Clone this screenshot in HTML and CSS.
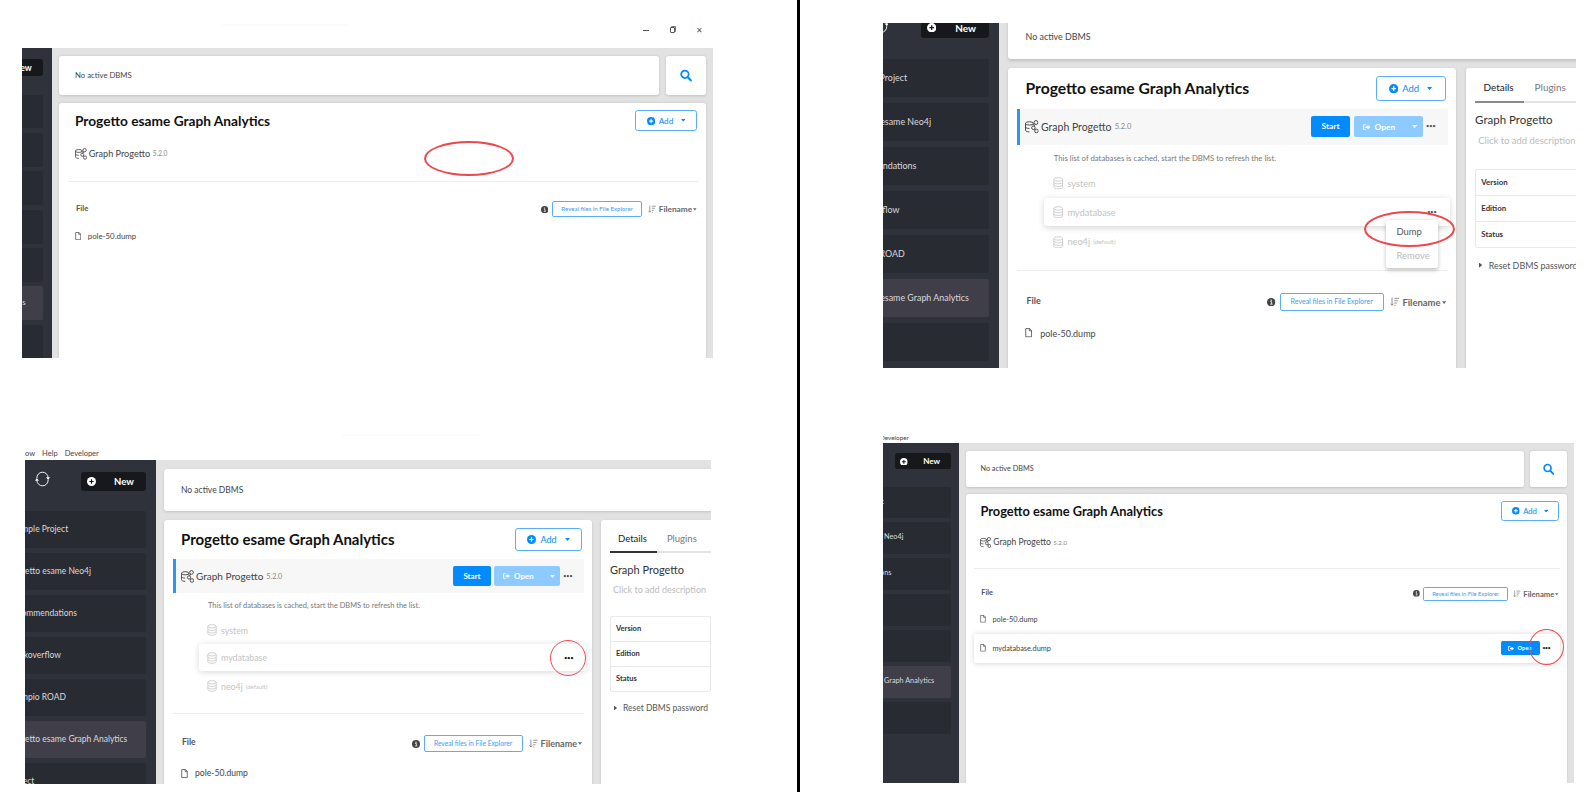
FILE: index.html
```html
<!DOCTYPE html>
<html lang="en">
<head>
<meta charset="utf-8">
<title>Neo4j Desktop steps</title>
<link rel="stylesheet" href="styles.css">
</head>
<body>

<svg class="defs" width="0" height="0">
  <symbol id="i-plus" viewBox="0 0 16 16"><circle cx="8" cy="8" r="8" fill="currentColor"/><path d="M8 4v8M4 8h8" stroke="var(--plus, #fff)" stroke-width="2.2"/></symbol>
  <symbol id="i-caret" viewBox="0 0 8 5"><path d="M0 0h8L4 5z" fill="currentColor"/></symbol>
  <symbol id="i-search" viewBox="0 0 16 16"><circle cx="6.6" cy="6.6" r="5" fill="none" stroke="currentColor" stroke-width="2.4"/><path d="M10.4 10.4l4.4 4.6" stroke="currentColor" stroke-width="2.8" stroke-linecap="round"/></symbol>
  <symbol id="i-graph" viewBox="0 0 14 14" fill="none" stroke="currentColor" stroke-width="1"><ellipse cx="4.5" cy="3.5" rx="4" ry="1.7"/><path d="M.5 3.5v7c0 1 1.8 1.7 4 1.7M.5 7c0 1 1.8 1.7 4 1.7M8.5 3.5v2"/><circle cx="11.3" cy="2.6" r="2"/><circle cx="8.6" cy="8" r="1.8"/><circle cx="11.8" cy="11.3" r="1.9"/><path d="M10.5 4.4L9.2 6.4M9.8 9.4l.8.7"/></symbol>
  <symbol id="i-db" viewBox="0 0 12 14" fill="none" stroke="currentColor" stroke-width="1"><ellipse cx="6" cy="2.6" rx="5" ry="2"/><path d="M1 2.6v8.8c0 1.1 2.2 2 5 2s5-.9 5-2V2.6M1 5.6c0 1.1 2.2 2 5 2s5-.9 5-2M1 8.6c0 1.1 2.2 2 5 2s5-.9 5-2"/></symbol>
  <symbol id="i-file" viewBox="0 0 10 13" fill="none" stroke="currentColor" stroke-width="1.1"><path d="M1 .8h5.4L9 3.4v8.8H1zM6 .8v3h3"/></symbol>
  <symbol id="i-info" viewBox="0 0 16 16"><circle cx="8" cy="8" r="8" fill="currentColor"/><path d="M6.2 7h2.6v4.4M6.2 11.8h4.4" stroke="#fff" stroke-width="1.6" fill="none"/><circle cx="8" cy="4.4" r="1.3" fill="#fff"/></symbol>
  <symbol id="i-sort" viewBox="0 0 14 14" fill="none" stroke="currentColor" stroke-width="1.2"><path d="M3 1v11M.8 10l2.2 2.4L5.2 10M6.5 2h7M6.5 5.5h5.4M6.5 9h3.6M6.5 12.5h1.8"/></symbol>
  <symbol id="i-sync" viewBox="0 0 16 16" fill="none" stroke="currentColor" stroke-width="1"><path d="M2 7A6 6 0 0 1 14 6.5M14 9A6 6 0 0 1 2 9.5"/><path d="M11.8 6.2H16L14 9zM0 9.8h4.2L2 7z" fill="currentColor" stroke="none"/></symbol>
  <symbol id="i-open" viewBox="0 0 12 10"><path d="M4.6 1H1v8h3.6" fill="none" stroke="currentColor" stroke-width="1.5"/><path d="M4 3.6h3.4V1L12 5 7.4 9V6.4H4z" fill="currentColor"/></symbol>
</svg>

<div class="smudge smudge-a"></div>
<div class="smudge smudge-c"></div>
<div class="divider-line"></div>

<!-- window buttons of the first shot -->
<div class="win-controls">
  <span class="win-min"></span>
  <span class="win-max"></span>
  <span class="win-close">&#10005;</span>
</div>

<!-- step 1: project without selected dbms -->
<div class="shot shot-a">
  <div class="app">
    <div class="sidebar">
      <div class="sidebar-inner">
        <div class="side-head"><svg class="sync"><use href="#i-sync"/></svg><div class="new-btn"><svg class="new-plus"><use href="#i-plus"/></svg><span>New</span></div></div>
        <div class="side-item"></div>
        <div class="side-item"></div>
        <div class="side-item"></div>
        <div class="side-item"></div>
        <div class="side-item"></div>
        <div class="side-item active">Progetto esame Graph Analytics</div>
        <div class="side-item"></div>
      </div>
    </div>
    <div class="content">
      <div class="top-row">
        <div class="card status">No active DBMS</div>
        <div class="card search"><svg class="search-icon"><use href="#i-search"/></svg></div>
      </div>
      <div class="card main">
        <div class="main-head">
          <h1>Progetto esame Graph Analytics</h1>
          <div class="add-btn"><svg class="add-plus"><use href="#i-plus"/></svg><span>Add</span><svg class="caret"><use href="#i-caret"/></svg></div>
        </div>
        <div class="dbms-row">
          <svg class="graph-icon"><use href="#i-graph"/></svg><span class="dbms-name">Graph Progetto</span><span class="dbms-ver">5.2.0</span>
        </div>
        <div class="rule"></div>
        <div class="files-head">
          <span class="files-title">File</span>
          <svg class="info-icon"><use href="#i-info"/></svg>
          <div class="reveal-btn">Reveal files in File Explorer</div>
          <svg class="sort-icon"><use href="#i-sort"/></svg>
          <span class="sort-label">Filename</span><svg class="sort-caret"><use href="#i-caret"/></svg>
        </div>
        <div class="file-row"><svg class="file-icon"><use href="#i-file"/></svg><span>pole-50.dump</span></div>
      </div>
    </div>
  </div>
</div>

<!-- step 3: dump menu -->
<div class="shot shot-b">
  <div class="app">
    <div class="sidebar">
      <div class="sidebar-inner">
        <div class="side-head"><svg class="sync"><use href="#i-sync"/></svg><div class="new-btn"><svg class="new-plus"><use href="#i-plus"/></svg><span>New</span></div></div>
        <div class="side-item">Example Project</div>
        <div class="side-item">Progetto esame Neo4j</div>
        <div class="side-item">Recommendations</div>
        <div class="side-item">Stackoverflow</div>
        <div class="side-item">Esempio ROAD</div>
        <div class="side-item active">Progetto esame Graph Analytics</div>
        <div class="side-item"></div>
      </div>
    </div>
    <div class="content wide">
      <div class="top-row">
        <div class="card status">No active DBMS</div>
      </div>
      <div class="panes">
        <div class="card main fixed">
          <div class="main-head">
            <h1>Progetto esame Graph Analytics</h1>
            <div class="add-btn"><svg class="add-plus"><use href="#i-plus"/></svg><span>Add</span><svg class="caret"><use href="#i-caret"/></svg></div>
          </div>
          <div class="dbms-row selected">
            <svg class="graph-icon"><use href="#i-graph"/></svg><span class="dbms-name">Graph Progetto</span><span class="dbms-ver">5.2.0</span>
            <div class="btn-start">Start</div>
            <div class="btn-open"><svg class="open-icon"><use href="#i-open"/></svg><span>Open</span><svg class="open-caret"><use href="#i-caret"/></svg></div>
            <span class="dots">&bull;&bull;&bull;</span>
          </div>
          <div class="db-list">
            <div class="db-hint">This list of databases is cached, start the DBMS to refresh the list.</div>
            <div class="db-row"><svg class="db-icon"><use href="#i-db"/></svg><span>system</span></div>
            <div class="db-row raised"><svg class="db-icon"><use href="#i-db"/></svg><span>mydatabase</span><span class="dots">&bull;&bull;&bull;</span>
              <div class="db-menu">
                <div class="menu-item">Dump</div>
                <div class="menu-item off">Remove</div>
              </div>
            </div>
            <div class="db-row"><svg class="db-icon"><use href="#i-db"/></svg><span>neo4j</span><span class="db-default">(default)</span></div>
          </div>
          <div class="rule"></div>
          <div class="files-head">
            <span class="files-title">File</span>
            <svg class="info-icon"><use href="#i-info"/></svg>
            <div class="reveal-btn">Reveal files in File Explorer</div>
            <svg class="sort-icon"><use href="#i-sort"/></svg>
            <span class="sort-label">Filename</span><svg class="sort-caret"><use href="#i-caret"/></svg>
          </div>
          <div class="file-row"><svg class="file-icon"><use href="#i-file"/></svg><span>pole-50.dump</span></div>
        </div>
        <div class="card details">
          <div class="tabs soft"><span class="tab on">Details</span><span class="tab">Plugins</span></div>
          <div class="det-title">Graph Progetto</div>
          <div class="det-desc">Click to add description</div>
          <div class="det-table"><div>Version</div><div>Edition</div><div>Status</div></div>
          <div class="det-reset"><svg class="reset-caret"><use href="#i-caret"/></svg>Reset DBMS password</div>
        </div>
      </div>
    </div>
  </div>
</div>

<!-- step 2: hover on the database row -->
<div class="menu-bar menu-c"><span>ow</span><span>Help</span><span>Developer</span></div>
<div class="shot shot-c">
  <div class="app">
    <div class="sidebar">
      <div class="sidebar-inner">
        <div class="side-head"><svg class="sync"><use href="#i-sync"/></svg><div class="new-btn"><svg class="new-plus"><use href="#i-plus"/></svg><span>New</span></div></div>
        <div class="side-item">Example Project</div>
        <div class="side-item">Progetto esame Neo4j</div>
        <div class="side-item">Recommendations</div>
        <div class="side-item">Stackoverflow</div>
        <div class="side-item">Esempio ROAD</div>
        <div class="side-item active">Progetto esame Graph Analytics</div>
        <div class="side-item">Project</div>
      </div>
    </div>
    <div class="content wide">
      <div class="top-row">
        <div class="card status">No active DBMS</div>
      </div>
      <div class="panes">
        <div class="card main fixed">
          <div class="main-head">
            <h1>Progetto esame Graph Analytics</h1>
            <div class="add-btn"><svg class="add-plus"><use href="#i-plus"/></svg><span>Add</span><svg class="caret"><use href="#i-caret"/></svg></div>
          </div>
          <div class="dbms-row selected">
            <svg class="graph-icon"><use href="#i-graph"/></svg><span class="dbms-name">Graph Progetto</span><span class="dbms-ver">5.2.0</span>
            <div class="btn-start">Start</div>
            <div class="btn-open"><svg class="open-icon"><use href="#i-open"/></svg><span>Open</span><svg class="open-caret"><use href="#i-caret"/></svg></div>
            <span class="dots">&bull;&bull;&bull;</span>
          </div>
          <div class="db-list">
            <div class="db-hint">This list of databases is cached, start the DBMS to refresh the list.</div>
            <div class="db-row"><svg class="db-icon"><use href="#i-db"/></svg><span>system</span></div>
            <div class="db-row raised"><svg class="db-icon"><use href="#i-db"/></svg><span>mydatabase</span><span class="dots dark">&bull;&bull;&bull;</span></div>
            <div class="db-row"><svg class="db-icon"><use href="#i-db"/></svg><span>neo4j</span><span class="db-default">(default)</span></div>
          </div>
          <div class="rule"></div>
          <div class="files-head">
            <span class="files-title">File</span>
            <svg class="info-icon"><use href="#i-info"/></svg>
            <div class="reveal-btn">Reveal files in File Explorer</div>
            <svg class="sort-icon"><use href="#i-sort"/></svg>
            <span class="sort-label">Filename</span><svg class="sort-caret"><use href="#i-caret"/></svg>
          </div>
          <div class="file-row"><svg class="file-icon"><use href="#i-file"/></svg><span>pole-50.dump</span></div>
        </div>
        <div class="card details">
          <div class="tabs"><span class="tab on">Details</span><span class="tab">Plugins</span></div>
          <div class="det-title">Graph Progetto</div>
          <div class="det-desc">Click to add description</div>
          <div class="det-table"><div>Version</div><div>Edition</div><div>Status</div></div>
          <div class="det-reset"><svg class="reset-caret"><use href="#i-caret"/></svg>Reset DBMS password</div>
        </div>
      </div>
    </div>
  </div>
</div>

<!-- step 4: dump listed in files -->
<div class="menu-bar menu-d"><span>Developer</span></div>
<div class="shot shot-d">
  <div class="app">
    <div class="sidebar">
      <div class="sidebar-inner">
        <div class="side-head"><svg class="sync"><use href="#i-sync"/></svg><div class="new-btn"><svg class="new-plus"><use href="#i-plus"/></svg><span>New</span></div></div>
        <div class="side-item">Example Project</div>
        <div class="side-item">Progetto esame Neo4j</div>
        <div class="side-item">Recommendations</div>
        <div class="side-item">Stackoverflow</div>
        <div class="side-item">Esempio ROAD</div>
        <div class="side-item active">Progetto esame Graph Analytics</div>
        <div class="side-item"></div>
      </div>
    </div>
    <div class="content">
      <div class="top-row">
        <div class="card status">No active DBMS</div>
        <div class="card search"><svg class="search-icon"><use href="#i-search"/></svg></div>
      </div>
      <div class="card main">
        <div class="main-head">
          <h1>Progetto esame Graph Analytics</h1>
          <div class="add-btn"><svg class="add-plus"><use href="#i-plus"/></svg><span>Add</span><svg class="caret"><use href="#i-caret"/></svg></div>
        </div>
        <div class="dbms-row">
          <svg class="graph-icon"><use href="#i-graph"/></svg><span class="dbms-name">Graph Progetto</span><span class="dbms-ver">5.2.0</span>
        </div>
        <div class="rule"></div>
        <div class="files-head">
          <span class="files-title">File</span>
          <svg class="info-icon"><use href="#i-info"/></svg>
          <div class="reveal-btn">Reveal files in File Explorer</div>
          <svg class="sort-icon"><use href="#i-sort"/></svg>
          <span class="sort-label">Filename</span><svg class="sort-caret"><use href="#i-caret"/></svg>
        </div>
        <div class="file-row"><svg class="file-icon"><use href="#i-file"/></svg><span>pole-50.dump</span></div>
        <div class="file-row raised"><svg class="file-icon"><use href="#i-file"/></svg><span>mydatabase.dump</span>
          <div class="btn-file-open"><svg class="open-icon"><use href="#i-open"/></svg><span>Open</span></div>
          <span class="dots dark">&bull;&bull;&bull;</span>
        </div>
      </div>
    </div>
  </div>
</div>

<div class="mark mark-a"></div>
<div class="mark mark-b"></div>
<div class="mark thin mark-c"></div>
<div class="mark thin mark-d"></div>

</body>
</html>
```

FILE: styles.css
```css
html, body {
  margin: 0;
  padding: 0;
  background: #fff;
  font-family: "Lato", "Liberation Sans", sans-serif;
  color: #333;
}
body {
  position: relative;
  width: 1596px;
  height: 792px;
  overflow: hidden;
}
.defs {
  position: absolute;
}
svg {
  display: block;
  flex: none;
}

/* the collage, each screenshot is placed on a free canvas */
.shot {
  position: absolute;
  overflow: hidden;
  background: #e2e2e2;
}
.shot-a { left: 22px; top: 48px; width: 691px; height: 310px; }
.shot-b { left: 883px; top: 23px; width: 693px; height: 345px; }
.shot-c { left: 25px; top: 460px; width: 686px; height: 324px; }
.shot-d { left: 883px; top: 443px; width: 691px; height: 340px; }

.shot-a .app { zoom: 0.914; }
.shot-b .app { zoom: 1.048; margin-top: -17px; }
.shot-d .app { zoom: 0.855; }

.shot-a .sidebar { width: 33px; }
.shot-b .sidebar { width: 111px; }
.shot-c .sidebar { width: 131px; }
.shot-d .sidebar { width: 89px; }

.divider-line {
  position: absolute;
  left: 797px;
  top: 0;
  width: 3px;
  height: 792px;
  background: #000;
}
.smudge {
  position: absolute;
  height: 2px;
  background: #fbfbfb;
}
.smudge-a { left: 222px; top: 24px; width: 126px; }
.smudge-c { left: 342px; top: 434px; width: 136px; }

.win-controls {
  position: absolute;
  left: 643px;
  top: 24px;
  display: flex;
  gap: 21px;
  align-items: center;
  height: 12px;
  color: #555;
}
.win-min {
  width: 6px;
  height: 1px;
  background: #555;
}
.win-max {
  width: 3px;
  height: 4px;
  border: 1px solid #555;
  border-radius: 1px;
  box-shadow: 1px -1px 0 #777;
}
.win-close {
  font-size: 8px;
  line-height: 12px;
}

.menu-bar {
  position: absolute;
  display: flex;
  gap: 7px;
  font-size: 7.5px;
  line-height: 10px;
  color: #444;
  overflow: hidden;
}
.menu-c { left: 25px; top: 449px; }
.menu-d {
  left: 883px;
  top: 433px;
  width: 26px;
  justify-content: flex-end;
  font-size: 6.4px;
}

.mark {
  position: absolute;
  box-sizing: border-box;
  border: 2px solid #f0474c;
  border-radius: 50%;
}
.mark.thin { border-width: 1px; }
.mark-a { left: 424px; top: 141px; width: 90px; height: 35px; }
.mark-b { left: 1364px; top: 211px; width: 91px; height: 36px; }
.mark-c { left: 550px; top: 640px; width: 36px; height: 36px; }
.mark-d { left: 1529px; top: 629px; width: 35px; height: 36px; }

/* app */
.app {
  display: flex;
  height: 460px;
}
.sidebar {
  flex: none;
  display: flex;
  justify-content: flex-end;
  overflow: hidden;
  background: #2f323a;
}
.sidebar-inner {
  flex: none;
  width: 190px;
  padding-right: 10px;
  box-sizing: border-box;
}
.side-head {
  display: flex;
  justify-content: flex-end;
  align-items: flex-start;
  gap: 31px;
  height: 46px;
  padding-top: 12px;
  box-sizing: border-box;
}
.sync {
  width: 15px;
  height: 16px;
  color: #fff;
  margin-top: -1px;
}
.new-btn {
  display: flex;
  align-items: center;
  width: 65px;
  height: 19px;
  padding-left: 6px;
  box-sizing: border-box;
  background: #17181c;
  border-radius: 3px;
  color: #fff;
  font-size: 9.5px;
  font-weight: 700;
}
.new-plus {
  width: 9px;
  height: 9px;
  --plus: #17181c;
  margin-right: 18px;
}
.side-item {
  height: 37px;
  margin-top: 5px;
  padding-left: 42px;
  background: #292b32;
  border-radius: 2px;
  color: #d9dade;
  font-size: 8.5px;
  line-height: 36px;
  white-space: nowrap;
}
.side-item.active {
  background: #403e48;
}

.content {
  flex: 1;
  min-width: 0;
  padding: 9px 8px 0;
}
.content.wide {
  flex: none;
  width: 720px;
}
.top-row {
  display: flex;
  gap: 8px;
  height: 42px;
  margin-bottom: 9px;
}
.card {
  background: #fff;
  border-radius: 3px;
  box-shadow: 0 1px 3px rgba(0, 0, 0, 0.14);
}
.status {
  flex: 1;
  padding-left: 17px;
  font-size: 8.5px;
  line-height: 42px;
  color: #444;
}
.search {
  flex: none;
  width: 43px;
  display: flex;
  align-items: center;
  justify-content: center;
}
.search-icon {
  width: 13px;
  height: 14px;
  color: #018bff;
}

.panes {
  display: flex;
  gap: 9px;
}
.main {
  min-height: 400px;
  padding: 0 8px 0 9px;
}
.main.fixed {
  flex: none;
  width: 428px;
  box-sizing: border-box;
}
.main-head {
  display: flex;
  justify-content: space-between;
  align-items: center;
  height: 23px;
  padding: 8px 2px 8px 8px;
}
h1 {
  margin: 0;
  margin-top: -1px;
  font-size: 15px;
  font-weight: 700;
  color: #111;
}
.add-btn {
  display: flex;
  align-items: center;
  justify-content: center;
  width: 67px;
  height: 23px;
  box-sizing: border-box;
  border: 1px solid #59adff;
  border-radius: 3px;
  color: #018bff;
  font-size: 9px;
}
.add-plus {
  width: 9px;
  height: 9px;
  margin-right: 4px;
}
.caret {
  width: 5px;
  height: 3px;
  margin-left: 8px;
}

.dbms-row {
  display: flex;
  align-items: center;
  height: 34px;
  margin-bottom: 13px;
  padding: 0 11px 0 8px;
  color: #444;
}
.dbms-row.selected {
  margin-bottom: 0;
  padding-left: 5px;
  border-left: 3px solid #2d96f5;
  background: #f7f7f7;
  border-radius: 0 2px 2px 0;
}
.graph-icon {
  width: 13px;
  height: 13px;
  margin-right: 2px;
  color: #444;
}
.dbms-name {
  font-size: 10px;
}
.dbms-ver {
  margin-left: 3px;
  font-size: 7.2px;
  color: #888;
}
.btn-start {
  margin-left: auto;
  width: 38px;
  height: 20px;
  background: #018bff;
  border-radius: 2px;
  color: #fff;
  font-size: 8px;
  font-weight: 700;
  line-height: 20px;
  text-align: center;
}
.btn-open {
  display: flex;
  align-items: center;
  width: 66px;
  height: 20px;
  margin-left: 3px;
  padding: 0 5px 0 9px;
  box-sizing: border-box;
  background: #8ccaff;
  border-radius: 2px;
  color: #fff;
  font-size: 8px;
  font-weight: 700;
}
.open-icon {
  width: 7px;
  height: 6px;
  margin-right: 4px;
}
.open-caret {
  width: 5px;
  height: 3px;
  margin-left: auto;
}
.dots {
  margin-left: 3px;
  width: 10px;
  font-size: 6px;
  letter-spacing: -0.4px;
  color: #555;
  line-height: 10px;
  white-space: nowrap;
}
.dots.dark {
  color: #111;
}

.db-list {
  height: 108px;
  margin-bottom: 12px;
  padding-left: 26px;
}
.db-hint {
  padding-left: 9px;
  height: 23px;
  font-size: 7.4px;
  line-height: 26px;
  color: #777;
}
.db-row {
  position: relative;
  display: flex;
  align-items: center;
  height: 28px;
  padding: 0 3px 0 8px;
  color: #c3c3c3;
  font-size: 8.8px;
}
.db-row.raised {
  margin-right: -2px;
  background: #fff;
  border-radius: 3px;
  box-shadow: 0 1px 6px rgba(0, 0, 0, 0.16);
  height: 27px;
  margin-bottom: 1px;
}
.db-row .dots {
  margin-left: auto;
  margin-right: 9px;
}
.db-icon {
  width: 10px;
  height: 12px;
  margin-right: 4px;
  color: #c8c8c8;
}
.db-default {
  margin-left: 3px;
  font-size: 6px;
}
/* open menu lies over the list */
.db-menu {
  position: absolute;
  right: 11px;
  top: 21px;
  width: 50px;
  background: #fff;
  border-radius: 2px;
  box-shadow: 0 1px 4px rgba(0, 0, 0, 0.25);
}
.menu-item {
  height: 23px;
  padding-left: 10px;
  color: #555;
  font-size: 9px;
  line-height: 23px;
}
.menu-item.off {
  color: #bbb;
}

.rule {
  height: 1px;
  background: #ececec;
}
.files-head {
  display: flex;
  align-items: center;
  height: 17px;
  margin-top: 21px;
  padding: 0 2px 0 9px;
  color: #555;
}
.files-title {
  margin-right: auto;
  margin-top: -3px;
  font-size: 8.5px;
  font-weight: 700;
}
.info-icon {
  width: 8px;
  height: 8px;
  margin-right: 4px;
  color: #444;
}
.reveal-btn {
  width: 99px;
  height: 17px;
  box-sizing: border-box;
  border: 1px solid #59adff;
  border-radius: 2px;
  color: #3a9df5;
  font-size: 6.7px;
  line-height: 15px;
  text-align: center;
  white-space: nowrap;
}
.sort-icon {
  width: 9px;
  height: 9px;
  margin: 0 3px 0 6px;
  color: #777;
}
.sort-label {
  font-size: 9px;
  font-weight: 700;
  color: #666;
}
.sort-caret {
  width: 4px;
  height: 3px;
  margin-left: 1px;
  color: #666;
}
.file-row {
  display: flex;
  align-items: center;
  height: 34px;
  margin-top: 4px;
  padding: 0 11px 0 8px;
  color: #444;
  font-size: 8.6px;
}
.file-row + .file-row {
  margin-top: 0;
}
.file-row.raised {
  margin-top: 0;
  background: #fff;
  border-radius: 3px;
  box-shadow: 0 1px 6px rgba(0, 0, 0, 0.16);
}
.file-icon {
  width: 7px;
  height: 9px;
  margin-right: 7px;
}
.btn-file-open {
  display: flex;
  align-items: center;
  width: 45px;
  height: 16px;
  margin-left: auto;
  padding-left: 8px;
  box-sizing: border-box;
  background: #018bff;
  border-radius: 2px;
  color: #fff;
  font-size: 6.5px;
  font-weight: 700;
}

.details {
  flex: 1;
  min-height: 400px;
  padding-left: 9px;
}
.tabs {
  display: flex;
  height: 31px;
  border-bottom: 2px solid #e4e4e4;
  font-size: 9.5px;
  line-height: 40px;
  color: #777;
}
.tab {
  padding: 0 10px 0 8px;
  height: 33px;
  box-sizing: border-box;
  line-height: 38px;
}
.tab.on {
  color: #222;
  border-bottom: 2px solid #333;
}
.tabs.soft .tab.on {
  border-bottom-color: #8a8a8a;
}
.tab + .tab {
  padding-left: 10px;
}
.det-title {
  margin-top: 10px;
  font-size: 11px;
  color: #333;
  line-height: 14px;
}
.det-desc {
  margin-top: 6px;
  padding-left: 3px;
  font-size: 9px;
  color: #bbb;
  line-height: 14px;
}
.det-table {
  width: 101px;
  margin-top: 19px;
  box-sizing: border-box;
  border: 1px solid #e8e8e8;
  border-radius: 2px;
}
.det-table div {
  height: 25px;
  box-sizing: border-box;
  padding-left: 5px;
  border-bottom: 1px solid #e8e8e8;
  font-size: 7.5px;
  font-weight: 700;
  line-height: 24px;
  color: #333;
}
.det-table div:last-child {
  border-bottom: 0;
  height: 24px;
}
.det-reset {
  display: flex;
  align-items: center;
  margin-top: 11px;
  padding-left: 3px;
  font-size: 8.5px;
  color: #555;
  white-space: nowrap;
}
.reset-caret {
  width: 5px;
  height: 4px;
  margin-right: 5px;
  transform: rotate(-90deg);
}
```
